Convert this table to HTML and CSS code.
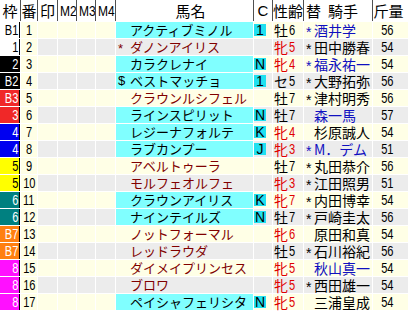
FILE: index.html
```html
<!DOCTYPE html>
<html lang="ja">
<head>
<meta charset="utf-8">
<title>出馬表</title>
<link rel="stylesheet" href="styles.css">
</head>
<body>
<div class="table">
  <div class="row head">
    <div class="h">枠</div><div class="h">番</div><div class="h">印</div><div class="h lat"><span class="n">M2</span></div><div class="h lat"><span class="n">M3</span></div><div class="h lat"><span class="n">M4</span></div>
    <div class="h hname">馬名</div><div class="h lat">C</div><div class="h">性齢</div><div class="h hjk"><span class="kae">替</span>騎手</div><div class="h hkin">斤量</div>
  </div>

  <div class="row cream">
    <div class="waku w1"><span class="n">B1</span></div><div class="c ban"><span class="n">1</span></div><div class="c"></div><div class="c"></div><div class="c"></div><div class="c"></div>
    <div class="c name cy"><span class="pre"></span><span>アクティブミノル</span></div><div class="c mk"><span class="badge">1</span></div>
    <div class="c sa">牡<span class="n">6</span></div><div class="c jk blue"><span class="pre">*</span><span>酒井学</span></div><div class="c kin"><span class="n">56</span></div>
  </div>
  <div class="row gray">
    <div class="waku w1"><span class="n">1</span></div><div class="c ban"><span class="n">2</span></div><div class="c"></div><div class="c"></div><div class="c"></div><div class="c"></div>
    <div class="c name"><span class="pre">*</span><span>ダノンアイリス</span></div><div class="c mk"></div>
    <div class="c sa red">牝<span class="n">5</span></div><div class="c jk"><span class="pre">*</span><span>田中勝春</span></div><div class="c kin"><span class="n">54</span></div>
  </div>
  <div class="row cream">
    <div class="waku w2"><span class="n">2</span></div><div class="c ban"><span class="n">3</span></div><div class="c"></div><div class="c"></div><div class="c"></div><div class="c"></div>
    <div class="c name cy"><span class="pre"></span><span>カラクレナイ</span></div><div class="c mk"><span class="badge">N</span></div>
    <div class="c sa red">牝<span class="n">4</span></div><div class="c jk blue"><span class="pre">*</span><span>福永祐一</span></div><div class="c kin"><span class="n">54</span></div>
  </div>
  <div class="row gray">
    <div class="waku w2"><span class="n">B2</span></div><div class="c ban"><span class="n">4</span></div><div class="c"></div><div class="c"></div><div class="c"></div><div class="c"></div>
    <div class="c name cy"><span class="pre dollar">$</span><span>ベストマッチョ</span></div><div class="c mk"><span class="badge">1</span></div>
    <div class="c sa">セ<span class="n">5</span></div><div class="c jk"><span class="pre">*</span><span>大野拓弥</span></div><div class="c kin"><span class="n">56</span></div>
  </div>
  <div class="row cream">
    <div class="waku w3"><span class="n">B3</span></div><div class="c ban"><span class="n">5</span></div><div class="c"></div><div class="c"></div><div class="c"></div><div class="c"></div>
    <div class="c name"><span class="pre"></span><span>クラウンルシフェル</span></div><div class="c mk"></div>
    <div class="c sa">牡<span class="n">7</span></div><div class="c jk"><span class="pre">*</span><span>津村明秀</span></div><div class="c kin"><span class="n">56</span></div>
  </div>
  <div class="row gray">
    <div class="waku w3"><span class="n">3</span></div><div class="c ban"><span class="n">6</span></div><div class="c"></div><div class="c"></div><div class="c"></div><div class="c"></div>
    <div class="c name cy"><span class="pre"></span><span>ラインスピリット</span></div><div class="c mk"><span class="badge">N</span></div>
    <div class="c sa">牡<span class="n">7</span></div><div class="c jk blue"><span class="pre"></span><span>森一馬</span></div><div class="c kin"><span class="n">57</span></div>
  </div>
  <div class="row cream">
    <div class="waku w4"><span class="n">4</span></div><div class="c ban"><span class="n">7</span></div><div class="c"></div><div class="c"></div><div class="c"></div><div class="c"></div>
    <div class="c name cy"><span class="pre"></span><span>レジーナフォルテ</span></div><div class="c mk"><span class="badge">K</span></div>
    <div class="c sa red">牝<span class="n">4</span></div><div class="c jk"><span class="pre"></span><span>杉原誠人</span></div><div class="c kin"><span class="n">54</span></div>
  </div>
  <div class="row gray">
    <div class="waku w4"><span class="n">4</span></div><div class="c ban"><span class="n">8</span></div><div class="c"></div><div class="c"></div><div class="c"></div><div class="c"></div>
    <div class="c name cy"><span class="pre"></span><span>ラブカンプー</span></div><div class="c mk"><span class="badge">J</span></div>
    <div class="c sa red">牝<span class="n">3</span></div><div class="c jk blue"><span class="pre">*</span><span>M．デム</span></div><div class="c kin"><span class="n">51</span></div>
  </div>
  <div class="row cream">
    <div class="waku w5"><span class="n">5</span></div><div class="c ban"><span class="n">9</span></div><div class="c"></div><div class="c"></div><div class="c"></div><div class="c"></div>
    <div class="c name"><span class="pre"></span><span>アベルトゥーラ</span></div><div class="c mk"></div>
    <div class="c sa">牡<span class="n">7</span></div><div class="c jk"><span class="pre">*</span><span>丸田恭介</span></div><div class="c kin"><span class="n">56</span></div>
  </div>
  <div class="row gray">
    <div class="waku w5"><span class="n">5</span></div><div class="c ban"><span class="n">10</span></div><div class="c"></div><div class="c"></div><div class="c"></div><div class="c"></div>
    <div class="c name"><span class="pre"></span><span>モルフェオルフェ</span></div><div class="c mk"></div>
    <div class="c sa red">牝<span class="n">3</span></div><div class="c jk"><span class="pre">*</span><span>江田照男</span></div><div class="c kin"><span class="n">51</span></div>
  </div>
  <div class="row cream">
    <div class="waku w6"><span class="n">6</span></div><div class="c ban"><span class="n">11</span></div><div class="c"></div><div class="c"></div><div class="c"></div><div class="c"></div>
    <div class="c name cy"><span class="pre"></span><span>クラウンアイリス</span></div><div class="c mk"><span class="badge">K</span></div>
    <div class="c sa red">牝<span class="n">7</span></div><div class="c jk"><span class="pre">*</span><span>内田博幸</span></div><div class="c kin"><span class="n">54</span></div>
  </div>
  <div class="row gray">
    <div class="waku w6"><span class="n">6</span></div><div class="c ban"><span class="n">12</span></div><div class="c"></div><div class="c"></div><div class="c"></div><div class="c"></div>
    <div class="c name cy"><span class="pre"></span><span>ナインテイルズ</span></div><div class="c mk"><span class="badge">N</span></div>
    <div class="c sa">牡<span class="n">7</span></div><div class="c jk"><span class="pre">*</span><span>戸崎圭太</span></div><div class="c kin"><span class="n">56</span></div>
  </div>
  <div class="row cream">
    <div class="waku w7"><span class="n">B7</span></div><div class="c ban"><span class="n">13</span></div><div class="c"></div><div class="c"></div><div class="c"></div><div class="c"></div>
    <div class="c name"><span class="pre"></span><span>ノットフォーマル</span></div><div class="c mk"></div>
    <div class="c sa red">牝<span class="n">6</span></div><div class="c jk"><span class="pre"></span><span>原田和真</span></div><div class="c kin"><span class="n">54</span></div>
  </div>
  <div class="row gray">
    <div class="waku w7"><span class="n">B7</span></div><div class="c ban"><span class="n">14</span></div><div class="c"></div><div class="c"></div><div class="c"></div><div class="c"></div>
    <div class="c name"><span class="pre"></span><span>レッドラウダ</span></div><div class="c mk"></div>
    <div class="c sa">牡<span class="n">5</span></div><div class="c jk"><span class="pre">*</span><span>石川裕紀</span></div><div class="c kin"><span class="n">56</span></div>
  </div>
  <div class="row cream">
    <div class="waku w8"><span class="n">8</span></div><div class="c ban"><span class="n">15</span></div><div class="c"></div><div class="c"></div><div class="c"></div><div class="c"></div>
    <div class="c name"><span class="pre"></span><span>ダイメイプリンセス</span></div><div class="c mk"></div>
    <div class="c sa red">牝<span class="n">5</span></div><div class="c jk blue"><span class="pre"></span><span>秋山真一</span></div><div class="c kin"><span class="n">54</span></div>
  </div>
  <div class="row gray">
    <div class="waku w8"><span class="n">8</span></div><div class="c ban"><span class="n">16</span></div><div class="c"></div><div class="c"></div><div class="c"></div><div class="c"></div>
    <div class="c name"><span class="pre"></span><span>ブロワ</span></div><div class="c mk"></div>
    <div class="c sa red">牝<span class="n">5</span></div><div class="c jk"><span class="pre">*</span><span>西田雄一</span></div><div class="c kin"><span class="n">54</span></div>
  </div>
  <div class="row cream">
    <div class="waku w8"><span class="n">8</span></div><div class="c ban"><span class="n">17</span></div><div class="c"></div><div class="c"></div><div class="c"></div><div class="c"></div>
    <div class="c name cy"><span class="pre"></span><span>ペイシャフェリシタ</span></div><div class="c mk"><span class="badge">N</span></div>
    <div class="c sa red">牝<span class="n">5</span></div><div class="c jk"><span class="pre"></span><span>三浦皇成</span></div><div class="c kin"><span class="n">54</span></div>
  </div>
</div>
</body>
</html>
```

FILE: styles.css
```css
html, body {
  margin: 0;
  padding: 0;
  background: #ffffff;
}

.table {
  width: 408px;
  height: 311px;
  overflow: hidden;
  display: flex;
  flex-direction: column;
  gap: 1px;
  background: #ffffff;
  font-family: "Liberation Sans", "Noto Sans CJK JP", sans-serif;
  color: #000000;
}

.row {
  display: grid;
  grid-template-columns: 20px 16px 19px 18px 18px 19px 137px 18px 30px 68px 1fr;
  column-gap: 1px;
  height: 16px;
}

.row.head {
  height: 21px;
  background: #505050;
}

.n {
  display: inline-block;
  transform: scaleX(0.74);
  transform-origin: center;
  font-family: "Liberation Sans", sans-serif;
}

.h {
  background: #ffffff;
  font-family: "Noto Sans CJK JP", sans-serif;
  font-size: 15px;
  line-height: 21px;
  text-align: center;
  white-space: nowrap;
  overflow: hidden;
}

.h.lat {
  font-family: "Liberation Sans", sans-serif;
  font-size: 15px;
}

.h.lat .n {
  transform: scaleX(0.8);
}

.h.hname {
  padding-left: 12px;
}

.h.hjk {
  text-align: left;
  padding-left: 2px;
}

.hjk .kae {
  margin-right: 7px;
}

.h.hkin {
  padding-right: 4px;
}

.c {
  font-size: 15px;
  line-height: 16px;
  white-space: nowrap;
}

.cream .c {
  background: #ffffe6;
}

.gray .c {
  background: #ececec;
}

.row .ban {
  background: #ffffe6;
  text-align: center;
}

.waku {
  box-sizing: border-box;
  border-right: 1px solid #000000;
  font-size: 15px;
  line-height: 16px;
  text-align: right;
  padding-right: 1px;
  white-space: nowrap;
}

.waku .n {
  transform-origin: right center;
}

.w1 { background: #ffffff; color: #000000; }
.w2 { background: #000000; color: #ffffff; }
.w3 { background: #f02828; color: #ffffff; }
.w4 { background: #0000f0; color: #ffffff; }
.w5 { background: #ffff00; color: #000000; }
.w6 { background: #008080; color: #ffffff; }
.w7 { background: #ff8010; color: #ffffff; }
.w8 { background: #ff10ff; color: #ffffff; }

.row .name {
  display: flex;
  align-items: center;
  justify-content: flex-start;
  overflow: hidden;
  font-family: "Noto Sans CJK JP", sans-serif;
  font-size: 13px;
  line-height: 16px;
  color: #800000;
  padding-left: 2px;
}

.row .name.cy {
  background: #80ffff;
  color: #000000;
}

.name .pre {
  flex: 0 0 12px;
  font-family: "Liberation Sans", sans-serif;
  transform: translateY(2px);
}

.name .pre.dollar {
  transform: none;
}

.mk .badge {
  display: block;
  width: 12px;
  height: 12px;
  margin-top: 2px;
  background: #20e0f0;
  font-size: 14px;
  line-height: 12px;
  text-align: center;
}

.sa {
  font-family: "Noto Sans CJK JP", sans-serif;
  font-size: 14px;
  line-height: 16px;
  padding-left: 1px;
}

.sa .n {
  font-size: 15px;
  line-height: 16px;
  transform-origin: left center;
  margin-left: 1px;
  vertical-align: top;
}

.sa.red {
  color: #e00000;
}

.row .jk {
  display: flex;
  align-items: center;
  justify-content: flex-start;
  font-family: "Noto Sans CJK JP", sans-serif;
  font-size: 14px;
  line-height: 16px;
  padding-left: 2px;
}

.jk .pre {
  flex: 0 0 8px;
  font-family: "Liberation Sans", sans-serif;
  transform: translateY(2px);
}

.jk.blue {
  color: #1010c0;
}

.row .kin {
  text-align: center;
  padding-right: 6px;
}
```
